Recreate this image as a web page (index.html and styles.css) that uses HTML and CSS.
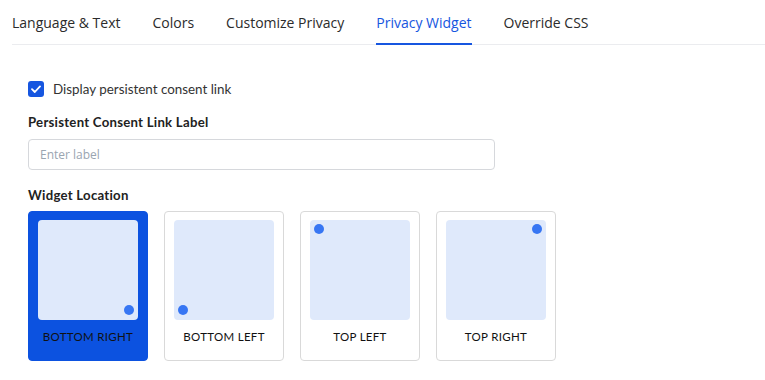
FILE: index.html
```html
<!DOCTYPE html>
<html lang="en">
<head>
    <meta charset="UTF-8">
    <title>Privacy Widget</title>
    <link rel="stylesheet" href="styles.css">
</head>
<body>
<div class="page">
    <nav class="tabs">
        <a class="tab">Language &amp; Text</a>
        <a class="tab">Colors</a>
        <a class="tab">Customize Privacy</a>
        <a class="tab active">Privacy Widget</a>
        <a class="tab">Override CSS</a>
    </nav>

    <div class="panel">
        <label class="check">
            <span class="box">
                <svg width="10" height="8" viewBox="0 0 10 8"><path d="M1 4.2 L3.8 7 L9 1.4" fill="none" stroke="#fff" stroke-width="1.8" stroke-linecap="round" stroke-linejoin="round"/></svg>
            </span>
            Display persistent consent link
        </label>

        <div class="field-label">Persistent Consent Link Label</div>
        <input class="text-input" type="text" placeholder="Enter label">

        <div class="field-label">Widget Location</div>
        <div class="locations">
            <div class="loc selected">
                <div class="preview"><span class="dot br"></span></div>
                <span class="loc-name">BOTTOM RIGHT</span>
            </div>
            <div class="loc">
                <div class="preview"><span class="dot bl"></span></div>
                <span class="loc-name">BOTTOM LEFT</span>
            </div>
            <div class="loc">
                <div class="preview"><span class="dot tl"></span></div>
                <span class="loc-name">TOP LEFT</span>
            </div>
            <div class="loc">
                <div class="preview"><span class="dot tr"></span></div>
                <span class="loc-name">TOP RIGHT</span>
            </div>
        </div>
    </div>
</div>
</body>
</html>
```

FILE: styles.css
```css
body {
    margin: 0;
    background: #fff;
    font-family: "Open Sans", Arial, sans-serif;
    color: #222;
}
.page {
    padding-left: 12px;
}
.tabs {
    display: flex;
    gap: 32px;
    height: 44px;
    border-bottom: 1px solid #ebecef;
}
.tab {
    display: flex;
    align-items: center;
    height: 44px;
    box-sizing: border-box;
    font-size: 14px;
    color: #2b2b2b;
    cursor: pointer;
}
.tab.active {
    color: #1656e0;
    border-bottom: 2px solid #1656e0;
    padding-top: 2px;
    margin-bottom: -1px;
    height: 45px;
}
.panel {
    padding: 35px 0 0 16px;
    font-family: "Lato", "Noto Sans", sans-serif;
}
.check {
    display: flex;
    align-items: center;
    gap: 9px;
    font-size: 13.4px;
    color: #333;
    height: 17px;
}
.box {
    width: 16px;
    height: 16px;
    border-radius: 3px;
    background: #1656e0;
    display: flex;
    align-items: center;
    justify-content: center;
}
.field-label {
    font-size: 13.2px;
    font-weight: 700;
    color: #222;
    letter-spacing: 0.25px;
    margin-top: 17px;
}
.text-input {
    display: block;
    margin-top: 9px;
    width: 467px;
    height: 31px;
    box-sizing: border-box;
    border: 1px solid #d6d8dc;
    border-radius: 4px;
    padding: 0 11px;
    font-family: "Open Sans", Arial, sans-serif;
    font-size: 12px;
    outline: none;
}
.text-input::placeholder {
    color: #9aa5b1;
}
.text-input + .field-label {
    margin-top: 17px;
}
.locations {
    display: flex;
    gap: 16px;
    margin-top: 8px;
}
.loc {
    width: 120px;
    height: 150px;
    box-sizing: border-box;
    border: 1px solid #d9d9d9;
    border-radius: 4px;
    padding: 8px;
    display: flex;
    flex-direction: column;
    align-items: center;
}
.loc.selected {
    background: #0c52e0;
    border-color: #0c52e0;
}
.preview {
    position: relative;
    width: 100px;
    height: 100px;
    border-radius: 4px;
    background: #dfe9fb;
}
.dot {
    position: absolute;
    width: 10px;
    height: 10px;
    border-radius: 50%;
    background: #3776f3;
}
.dot.br { right: 4px; bottom: 5px; }
.dot.bl { left: 4px; bottom: 5px; }
.dot.tl { left: 4px; top: 4px; }
.dot.tr { right: 4px; top: 4px; }
.loc-name {
    margin-top: 10px;
    font-size: 11.5px;
    letter-spacing: 0.3px;
    color: #111;
}
```
